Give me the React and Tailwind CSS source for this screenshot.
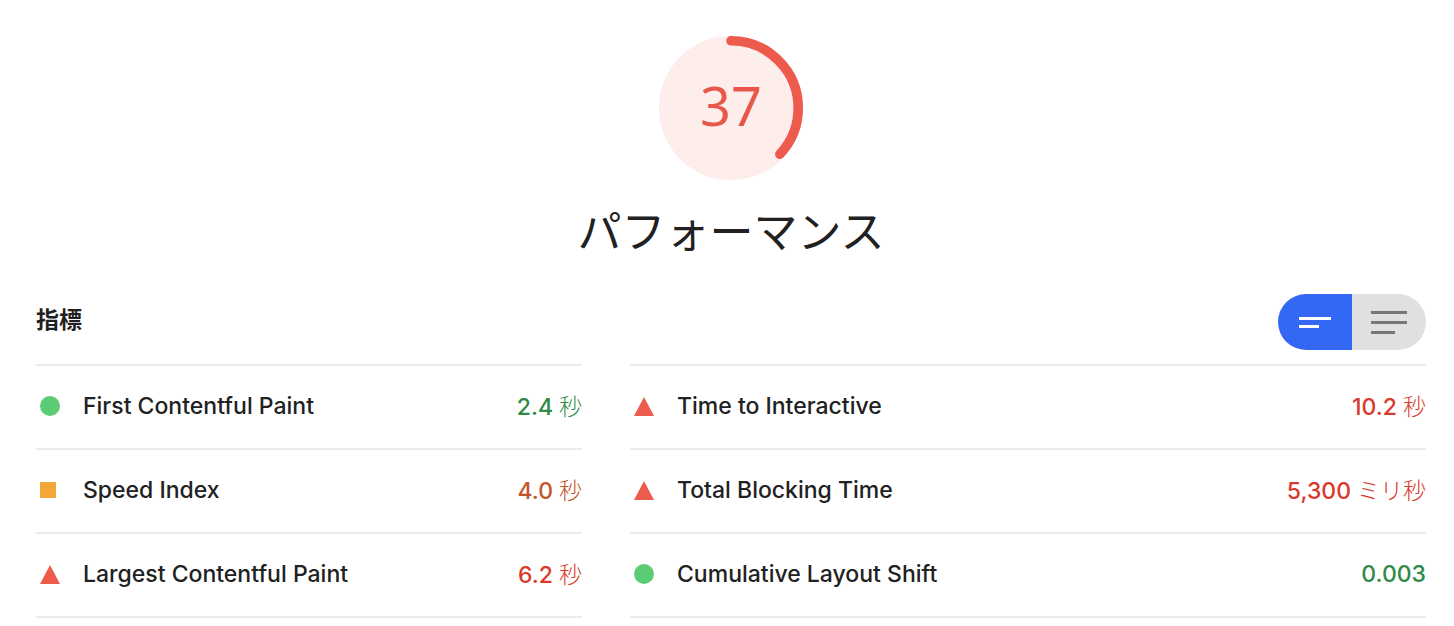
import React from 'react';

const metrics = {
  left: [
    { icon: 'pass', label: 'First Contentful Paint', value: '2.4', unit: '秒', tone: 'pass' },
    { icon: 'average', label: 'Speed Index', value: '4.0', unit: '秒', tone: 'average' },
    { icon: 'fail', label: 'Largest Contentful Paint', value: '6.2', unit: '秒', tone: 'fail' },
  ],
  right: [
    { icon: 'fail', label: 'Time to Interactive', value: '10.2', unit: '秒', tone: 'fail' },
    { icon: 'fail', label: 'Total Blocking Time', value: '5,300', unit: 'ミリ秒', tone: 'fail' },
    { icon: 'pass', label: 'Cumulative Layout Shift', value: '0.003', unit: '', tone: 'pass' },
  ],
};

const toneText = {
  pass: 'text-[#2f8a47]',
  average: 'text-[#c4552a]',
  fail: 'text-[#d93a2b]',
};

function StatusIcon({ type }) {
  if (type === 'pass') {
    return <span className="block w-5 h-5 rounded-full bg-[#5ccc74] ml-1" />;
  }
  if (type === 'average') {
    return <span className="block w-4 h-4 bg-[#f4a63a] ml-1" />;
  }
  return (
    <svg width="20" height="19" viewBox="0 0 20 19" className="ml-1">
      <polygon points="10,0 20,19 0,19" fill="#ec5b4c" />
    </svg>
  );
}

function Gauge({ score }) {
  const circumference = 2 * Math.PI * 56;
  return (
    <div className="relative w-[144px] h-[144px]">
      <svg viewBox="0 0 120 120" className="w-[144px] h-[144px] -rotate-90">
        <circle cx="60" cy="60" r="56" fill="#fdeeec" stroke="#fdeeec" strokeWidth="8" />
        <circle
          cx="60"
          cy="60"
          r="56"
          fill="none"
          stroke="#ec5b4c"
          strokeWidth="8"
          strokeLinecap="round"
          strokeDasharray={`${(score / 100) * circumference} ${circumference}`}
        />
      </svg>
      <div className="absolute inset-0 pb-[6px] flex items-center justify-center text-[54px] text-[#e8584a] font-['Noto_Sans',sans-serif] leading-none">
        {score}
      </div>
    </div>
  );
}

function MetricColumn({ rows }) {
  return (
    <div className="border-t-2 border-[#ebebeb]">
      {rows.map((m) => (
        <div key={m.label} className="flex items-center h-[84px] pb-[2px] border-b-2 border-[#ebebeb]">
          <div className="w-[47px] flex items-center">
            <StatusIcon type={m.icon} />
          </div>
          <div className="flex-1 text-[23px] font-medium text-[#212121]">{m.label}</div>
          <div className={`text-[23px] font-medium ${toneText[m.tone]}`}>
            {m.value}
            {m.unit && <span className="ml-[6px] font-['Noto_Sans_CJK_JP',sans-serif] font-light">{m.unit}</span>}
          </div>
        </div>
      ))}
    </div>
  );
}

export default function App() {
  return (
    <div className="min-h-[626px] bg-white pl-[36px] pr-[28px] pt-[36px] font-['Inter','Noto_Sans_CJK_JP',sans-serif]">
      {/* Score */}
      <div className="flex flex-col items-center">
        <Gauge score={37} />
        <h1 className="mt-[21px] text-[44px] leading-[56px] text-[#212121] font-['Noto_Sans_CJK_JP',sans-serif] font-normal">
          パフォーマンス
        </h1>
      </div>

      {/* Header */}
      <div className="mt-[37px] flex items-center justify-between">
        <h2 className="pb-[7px] text-[23px] font-bold text-[#212121] font-['Noto_Sans_CJK_JP',sans-serif]">指標</h2>
        <div className="flex h-[56px] rounded-full overflow-hidden">
          <button className="w-[74px] bg-[#3368f4] flex items-center justify-center">
            <svg width="32" height="11" viewBox="0 0 32 11">
              <rect x="0" y="0" width="32" height="3" fill="#fff" />
              <rect x="0" y="8" width="20" height="3" fill="#fff" />
            </svg>
          </button>
          <button className="w-[74px] bg-[#e0e0e0] flex items-center justify-center">
            <svg width="36" height="23" viewBox="0 0 36 23">
              <rect x="0" y="0" width="36" height="3" fill="#777" />
              <rect x="0" y="10" width="36" height="3" fill="#777" />
              <rect x="0" y="20" width="24" height="3" fill="#777" />
            </svg>
          </button>
        </div>
      </div>

      {/* Metrics */}
      <div className="mt-[14px] grid grid-cols-[546px_1fr] gap-x-[48px]">
        <MetricColumn rows={metrics.left} />
        <MetricColumn rows={metrics.right} />
      </div>
    </div>
  );
}
